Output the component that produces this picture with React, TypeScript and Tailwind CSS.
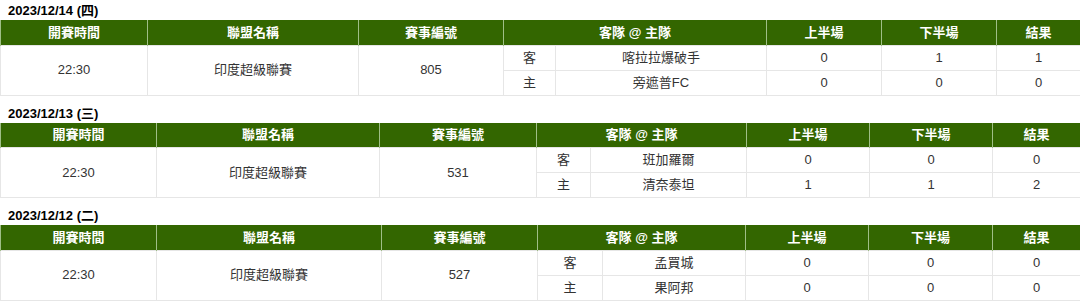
type Match = {
  date: string;
  time: string;
  league: string;
  no: string;
  away: string;
  home: string;
  h1: [string, string];
  h2: [string, string];
  res: [string, string];
  cols: number[];
};

const matches: Match[] = [
  {
    date: "2023/12/14 (四)",
    time: "22:30",
    league: "印度超級聯賽",
    no: "805",
    away: "喀拉拉爆破手",
    home: "旁遮普FC",
    h1: ["0", "0"],
    h2: ["1", "0"],
    res: ["1", "0"],
    cols: [147, 211, 145, 52, 211, 115, 115, 84],
  },
  {
    date: "2023/12/13 (三)",
    time: "22:30",
    league: "印度超級聯賽",
    no: "531",
    away: "班加羅爾",
    home: "清奈泰坦",
    h1: ["0", "1"],
    h2: ["0", "1"],
    res: ["0", "2"],
    cols: [156, 223, 157, 54, 156, 123, 123, 88],
  },
  {
    date: "2023/12/12 (二)",
    time: "22:30",
    league: "印度超級聯賽",
    no: "527",
    away: "孟買城",
    home: "果阿邦",
    h1: ["0", "0"],
    h2: ["0", "0"],
    res: ["0", "0"],
    cols: [156, 225, 156, 65, 143, 123, 124, 88],
  },
];

const th = "h-[25px] border-x border-[#9fbf86] font-bold text-white text-[13px] p-0";
const td = "h-[25px] border border-[#e6e6e6] text-[13px] text-[#333] p-0";

function MatchTable({ m }: { m: Match }) {
  return (
    <div className="mt-[7px] first:mt-0">
      <div className="h-[20px] pl-[8px] pt-[3px] text-[13px] font-bold leading-[16px] text-black">
        {m.date}
      </div>
      <table className="w-[1080px] table-fixed border-collapse text-center">
        <colgroup>
          {m.cols.map((w, i) => (
            <col key={i} style={{ width: w }} />
          ))}
        </colgroup>
        <thead>
          <tr className="bg-[#336600]">
            <th className={th}>開賽時間</th>
            <th className={th}>聯盟名稱</th>
            <th className={th}>賽事編號</th>
            <th className={th} colSpan={2}>
              客隊 @ 主隊
            </th>
            <th className={th}>上半場</th>
            <th className={th}>下半場</th>
            <th className={th}>結果</th>
          </tr>
        </thead>
        <tbody>
          <tr>
            <td className={td} rowSpan={2}>
              {m.time}
            </td>
            <td className={td} rowSpan={2}>
              {m.league}
            </td>
            <td className={td} rowSpan={2}>
              {m.no}
            </td>
            <td className={td}>客</td>
            <td className={td}>{m.away}</td>
            <td className={td}>{m.h1[0]}</td>
            <td className={td}>{m.h2[0]}</td>
            <td className={td}>{m.res[0]}</td>
          </tr>
          <tr>
            <td className={td}>主</td>
            <td className={td}>{m.home}</td>
            <td className={td}>{m.h1[1]}</td>
            <td className={td}>{m.h2[1]}</td>
            <td className={td}>{m.res[1]}</td>
          </tr>
        </tbody>
      </table>
    </div>
  );
}

export default function App() {
  return (
    <div
      className="w-[1080px] bg-white"
      style={{ fontFamily: '"Liberation Sans", "Noto Sans CJK TC", sans-serif' }}
    >
      {matches.map((m) => (
        <MatchTable key={m.no} m={m} />
      ))}
    </div>
  );
}
